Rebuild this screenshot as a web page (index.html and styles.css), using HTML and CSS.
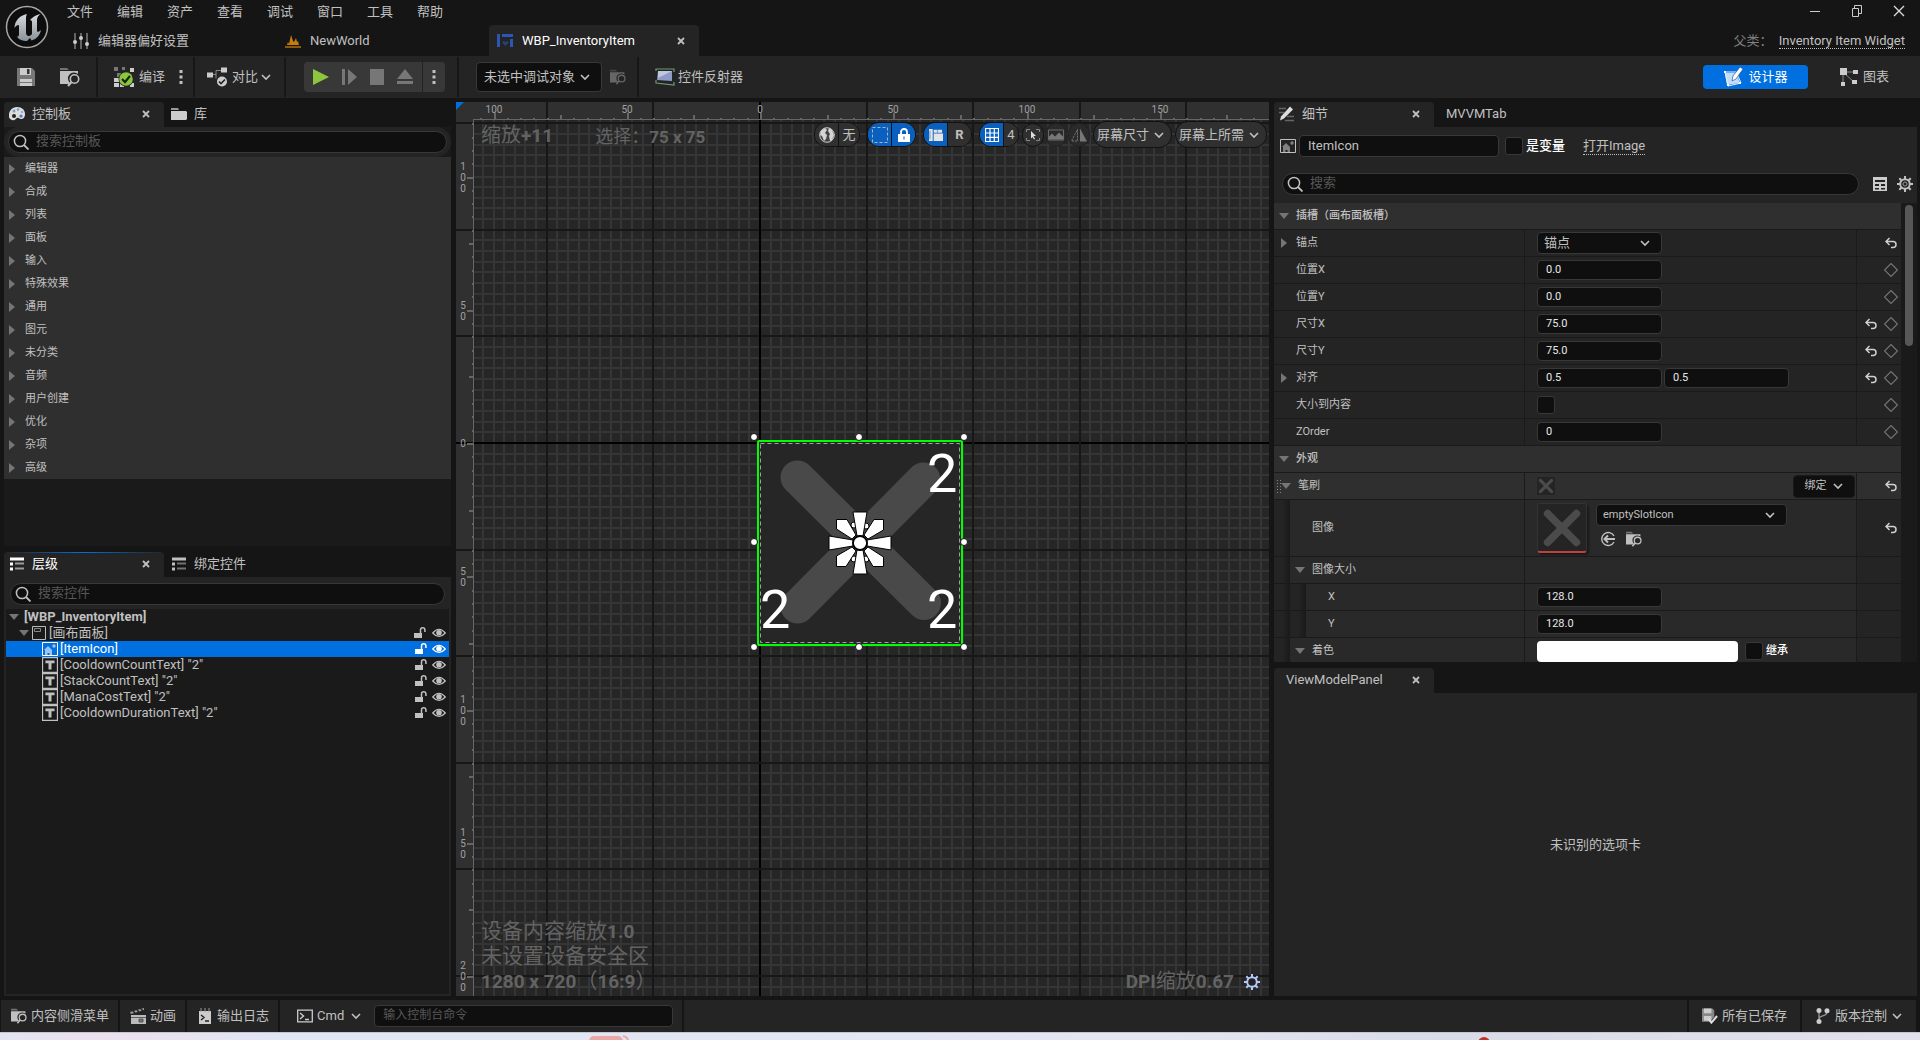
FILE: index.html
```html
<!DOCTYPE html>
<html lang="zh-CN">
<head>
    <meta charset="UTF-8">
    <title>WBP_InventoryItem</title>
    <link rel="stylesheet" href="styles.css">
</head>
<body>
    <svg class="sprite" aria-hidden="true">
        <symbol id="i-close" viewBox="0 0 8 8"><path d="M1 1l6 6M7 1L1 7" stroke="currentColor" stroke-width="1.8"/></symbol>
        <symbol id="i-chevron" viewBox="0 0 12 12"><path d="M2 4l4 4 4-4" fill="none" stroke="currentColor" stroke-width="1.6"/></symbol>
        <symbol id="i-right" viewBox="0 0 10 12"><path d="M2 1v10l6-5z" fill="currentColor"/></symbol>
        <symbol id="i-down" viewBox="0 0 10 12"><path d="M0 3h10L5 9z" fill="currentColor"/></symbol>
        <symbol id="i-search" viewBox="0 0 16 16"><circle cx="7" cy="7" r="5.6" fill="none" stroke="currentColor" stroke-width="1.5"/><path d="M11 11l4.5 4.5" stroke="currentColor" stroke-width="1.8"/></symbol>
        <symbol id="i-dots" viewBox="0 0 4 16"><path d="M.5 1h3v3h-3zM.5 6.500h3v3h-3zM.5 12h3v3h-3z" fill="currentColor"/></symbol>
        <symbol id="i-sliders" viewBox="0 0 16 16"><path d="M2 0v16M8 0v16M14 0v16" stroke="#999" stroke-width="1.2"/><circle cx="2" cy="9" r="2" fill="#ccc"/><circle cx="8" cy="5" r="2" fill="#ccc"/><circle cx="14" cy="11" r="2" fill="#ccc"/></symbol>
        <symbol id="i-world" viewBox="0 0 16 14"><path d="M0 12h16v2H0z" fill="#8a5a0c"/><path d="M2 11l1-3 1 2 2-9 2 6 1 1 2-4 1 4 1-1 1 4z" fill="#c77c0e"/></symbol>
        <symbol id="i-widget" viewBox="0 0 16 14"><path d="M0 0h3v13H0zM5 0h11v3H5zM13 5h3v8h-3z" fill="#2c55b4"/><path d="M8.500 12L5.500 9V7.500L7 7l1.500 1L10 7l1.500.5V9z" fill="#2a3f78"/></symbol>
        <symbol id="i-save" viewBox="0 0 18 18"><path d="M0 0h15l3 3v15H0z" fill="#777"/><path d="M3 0h11v7H3zM3 11h12v7H3z" fill="#ccc"/><path d="M10 1h2.500v5H10z" fill="#333"/><path d="M3 14h12v1H3z" fill="#777"/></symbol>
        <symbol id="i-browse" viewBox="0 0 20 18"><path d="M0 0h7l2 2H0z" fill="currentColor" opacity=".5"/><path d="M0 3h18v3a6 6 0 0 0-8 9l-1 1H0z" fill="currentColor"/><circle cx="14.500" cy="11" r="4.200" fill="none" stroke="currentColor" stroke-width="1.600"/><path d="M11.500 14L8 18" stroke="currentColor" stroke-width="2"/></symbol>
        <symbol id="i-compile" viewBox="0 0 20 20"><path d="M0 0h4v4H0zM8 0h3v3H8zM3 6h4v4H3z" fill="#777"/><path d="M16 1h4v4h-4zM0 11h5v4H0zM0 16h5v4H0zM6 16h4v4H6zM16 16h4v4h-4z" fill="#ccc"/><circle cx="12" cy="12" r="7.500" fill="#222"/><circle cx="12" cy="12" r="6.800" fill="#8cc63f"/><path d="M8 12l3 3 5-6" fill="none" stroke="#16260a" stroke-width="2.200"/></symbol>
        <symbol id="i-diff" viewBox="0 0 20 19"><path d="M5 7h4M9 11V3h5" fill="none" stroke="#888" stroke-width="1"/><path d="M0 5h6v5H0zM14 0h6v5h-6z" fill="#ccc"/><circle cx="15" cy="14" r="5" fill="#ccc"/><path d="M12 14l2 2 4-4" fill="none" stroke="#222" stroke-width="1.600"/></symbol>
        <symbol id="i-reflector" viewBox="0 0 20 18"><path d="M1 3V1h18v3M1 12v3l18 2v-3" fill="none" stroke="#6d9a70" stroke-width="1.200"/><path d="M3 3h14v10L2 12z" fill="#8f9bc4"/><path d="M3 3h14l-14 7z" fill="#c0c7de"/></symbol>
        <symbol id="i-palette" viewBox="0 0 16 14"><path d="M8 0c5 0 8 3 8 7s-2 5-4 5-2-2-4-1-2 3-5 2-3-3-3-5C0 4 3 0 8 0z" fill="#ddd"/><circle cx="5" cy="9" r="2" fill="#222"/><circle cx="5" cy="4" r="1.500" fill="#7f9cc4"/><circle cx="9" cy="2.500" r="1.300" fill="#7f9cc4"/><circle cx="13" cy="5" r="1.300" fill="#8fb1d8"/><circle cx="12" cy="9" r="1.600" fill="#4a78b8"/></symbol>
        <symbol id="i-folder" viewBox="0 0 16 12"><path d="M0 0h7l1 2H0z" fill="#999"/><path d="M0 3h15l1 1v7l-1 1H0z" fill="#ccc"/></symbol>
        <symbol id="i-list" viewBox="0 0 14 13"><path d="M0 0h14v3H0zM0 5h3v3H0zM0 10h3v3H0z" fill="currentColor"/><path d="M5 5h9v2H5zM5 10h9v2H5z" fill="currentColor" opacity=".55"/></symbol>
        <symbol id="i-lock" viewBox="0 0 12 12"><path d="M0 6h8v5H0z" fill="currentColor"/><path d="M6.500 6V3a2.200 2.200 0 0 1 4.400 0v2" fill="none" stroke="currentColor" stroke-width="1.500"/></symbol>
        <symbol id="i-eye" viewBox="0 0 14 10"><path d="M.7 5Q7-2.500 13.300 5 7 12 .7 5z" fill="none" stroke="currentColor" stroke-width="1.200"/><circle cx="7" cy="4.800" r="2.800" fill="currentColor"/></symbol>
        <symbol id="i-panel" viewBox="0 0 14 14"><path d="M.5.5h13v13H.5z" fill="none" stroke="#bbb"/><path d="M2.500 2.500h6v3h-6z" fill="none" stroke="#888"/></symbol>
        <symbol id="i-image" viewBox="0 0 16 14"><path d="M.5.5h15v13H.5z" fill="none" stroke="currentColor"/><path d="M2 8l4-4 4 4v5H7.500v-2h-2v2H3V8z" fill="currentColor" opacity=".6"/><circle cx="12" cy="4" r="1.700" fill="currentColor" opacity=".6"/></symbol>
        <symbol id="i-text" viewBox="0 0 14 14"><path d="M.5.5h13v13H.5z" fill="none" stroke="currentColor"/><path d="M3 3h8v2.500H8.300V11H5.700V5.500H3z" fill="currentColor"/></symbol>
        <symbol id="i-undo" viewBox="0 0 12 12"><path d="M4.500 1L1 4.500 4.500 8M1.500 4.500H8a3 3 0 0 1 0 6H6" fill="none" stroke="currentColor" stroke-width="1.500"/></symbol>
        <symbol id="i-diamond" viewBox="0 0 14 14"><path d="M7 .5L13.500 7 7 13.500.5 7z" fill="none" stroke="#757575" stroke-width="1.100"/></symbol>
        <symbol id="i-pencil" viewBox="0 0 16 15"><path d="M0 2h7M0 6h5M8 10h7M6 14h9" stroke="#666" stroke-width="1.500"/><path d="M1 14l1-4L11 0l3 3-9 9z" fill="#ddd"/></symbol>
        <symbol id="i-table" viewBox="0 0 14 14"><path d="M0 0h14v14H0z" fill="#ccc"/><path d="M2 3h10v2H2zM2 7h4v2H2zM8 7h4v2H8zM2 11h4v1.500H2zM8 11h4v1.500H8z" fill="#222"/></symbol>
        <symbol id="i-gear" viewBox="0 0 16 16"><path d="M8 0v16M0 8h16M2.300 2.300l11.400 11.400M13.700 2.300L2.300 13.700" stroke="currentColor" stroke-width="2"/><circle cx="8" cy="8" r="4.800" fill="#222" stroke="currentColor" stroke-width="2"/></symbol>
        <symbol id="i-gear-dot" viewBox="0 0 16 16"><use href="#i-gear"/><circle cx="8" cy="8" r="2" fill="none" stroke="#999"/></symbol>
        <symbol id="i-designer" viewBox="0 0 20 20"><path d="M2 6h11l4 10-13 2z" fill="#c4dcf6"/><path d="M1 5h14M2 5l3 14 13-3-3-7" fill="none" stroke="#e8f1fb"/><path d="M1 4h2v2H1zM4 17h2v2H4zM16 15h2v2h-2z" fill="#fff"/><path d="M9 14l1-5L17 0l3 2-7 10z" fill="#fff" stroke="#245a9c" stroke-width=".7"/></symbol>
        <symbol id="i-graph" viewBox="0 0 18 18"><path d="M4 5l10 9M4 4h10M3 4v10" stroke="#888" fill="none"/><path d="M0 0h7v7H0zM13 2h5v4h-5zM1 14h4v4H1zM12 12h5v4h-5z" fill="#ccc"/></symbol>
        <symbol id="i-use" viewBox="0 0 16 16"><path d="M14 5a6.500 6.500 0 1 0 0 6" fill="none" stroke="currentColor" stroke-width="1.400"/><path d="M15 8H5M8 4.500L4.500 8 8 11.500" fill="none" stroke="currentColor" stroke-width="2"/></symbol>
        <symbol id="i-cross" viewBox="0 0 48 48"><path d="M9 9l30 30M39 9L9 39" stroke="#4b4b4b" stroke-width="8" stroke-linecap="round"/></symbol>
        <symbol id="i-globe" viewBox="0 0 16 16"><circle cx="8" cy="8" r="7.300" fill="#444" stroke="#ccc"/><path d="M2 4l4-3 2 2-2 3 2 2-1 4-2 2-2-5-2-1zM10 1l3 2 2 5-2 5-2 1-1-5 1-2-2-3z" fill="#d4d4d4"/></symbol>
        <symbol id="i-dash" viewBox="0 0 16 16"><path d="M.5.5h15v15H.5z" fill="none" stroke="#a8b4c0" stroke-dasharray="3 2"/></symbol>
        <symbol id="i-locked" viewBox="0 0 12 14"><path d="M0 6h12v8H0z" fill="#fff"/><path d="M3 6V4a3 3 0 0 1 6 0v2" fill="none" stroke="#fff" stroke-width="1.800"/><path d="M5.500 8.500h1v3h-1z" fill="#0b5cb5"/></symbol>
        <symbol id="i-layout" viewBox="0 0 15 13"><path d="M0 0h4v13H0zM5 1h9v3H5zM5 5h10v8H5z" fill="#e4e4e4"/><path d="M9 1v3M1 2v9" stroke="#0b5cb5" stroke-width=".6"/></symbol>
        <symbol id="i-grid" viewBox="0 0 14 14"><path d="M.5.5h13v13H.5zM5 0v14M9.300 0v14M0 5h14M0 9.300h14" fill="none" stroke="#fff" stroke-width="1.200"/></symbol>
        <symbol id="i-pick" viewBox="0 0 14 12"><path d="M.5 3V.5H4M10 .5h3.500V3M13.500 9v2.500H10M4 11.500H.5V9" fill="none" stroke="#888"/><path d="M5 2l5 5H7.500L9 10l-1 .5L6.500 8 5 9.500z" fill="#ddd"/></symbol>
        <symbol id="i-picture" viewBox="0 0 16 11"><path d="M.5.5h15v10H.5z" fill="none" stroke="#6a6a6a"/><path d="M1 10V7l3-3 3 3 4-4 4 4v3z" fill="#777"/></symbol>
        <symbol id="i-flip" viewBox="0 0 16 13"><path d="M6.500 1v11.500H.5z" fill="none" stroke="#777" stroke-dasharray="2 1"/><path d="M9 0l7 13H9z" fill="#777"/></symbol>
        <symbol id="i-clap" viewBox="0 0 16 16"><path d="M0 4l14-4v2L1 6z" fill="#999"/><path d="M3 3l2 2M7 2l2 2M11 1l2 2" stroke="#242424" stroke-width="1.500"/><path d="M1 7h15v9H1z" fill="#bbb"/><path d="M1 9.500h15M9 11h4v3H9z" stroke="#444" fill="#777" stroke-width=".8"/></symbol>
        <symbol id="i-log" viewBox="0 0 12 16"><path d="M0 3h12v13H0z" fill="#ccc"/><path d="M2 0v4M6 0v4M10 0v4" stroke="#999"/><path d="M2 7l3 2.500L2 12M6 13h4" fill="none" stroke="#222" stroke-width="1.400"/></symbol>
        <symbol id="i-cmd" viewBox="0 0 16 13"><path d="M.7.7h14.600v11.600H.7z" fill="none" stroke="#ccc" stroke-width="1.300"/><path d="M3 3.500l3.500 3L3 9.500M8 10h4" fill="none" stroke="#ccc" stroke-width="1.400"/></symbol>
        <symbol id="i-saved" viewBox="0 0 17 16"><path d="M0 0h11l2 2v7l-5 5H0z" fill="#888"/><path d="M2 0h8v5H2zM2 8h8v5H2z" fill="#ccc"/><path d="M7 11l3 4 6-7" fill="none" stroke="#ddd" stroke-width="2.200"/></symbol>
        <symbol id="i-branch" viewBox="0 0 14 16"><path d="M3 3v10M11 4c0 5-8 3-8 7" fill="none" stroke="#999" stroke-width="1.300"/><circle cx="3" cy="2.500" r="2.500" fill="#ccc"/><circle cx="3" cy="13.500" r="2.500" fill="#ccc"/><circle cx="11" cy="2.800" r="2.500" fill="#ccc"/></symbol>
    </svg>

    <header class="titlebar">
        <svg class="logo" viewBox="0 0 44 44" role="img" aria-label="Unreal">
            <defs><linearGradient id="metal" x1="0" y1="0" x2="0" y2="1"><stop offset="0" stop-color="#dadada"/><stop offset="1" stop-color="#87929a"/></linearGradient></defs>
            <circle cx="22" cy="22" r="20.500" fill="#0d0d0d" stroke="#a8a8a8" stroke-width="1.500"/>
            <path d="M22 9C15 10.500 9.500 15.500 9.500 23c2-3 4.500-4 4.500-2v8c0 2-.5 2.500-2 2.500C14 35 18 36 22 36l3-3 1.500 2.500C32 34 35 30 36 25c-2 2-4 2.500-4 .5V15c0-3 1.500-4.500 3.500-6-5 1-8.500 3.500-10.500 6 1.500 0 2 1 2 2v12c-1 1.500-2.500 2-3.500 2s-2.500-1-2.500-3V13c0-2 .5-3 1-4z" fill="url(#metal)"/>
        </svg>
        <div class="title-main">
            <nav class="menu">
                <button>文件</button>
                <button>编辑</button>
                <button>资产</button>
                <button>查看</button>
                <button>调试</button>
                <button>窗口</button>
                <button>工具</button>
                <button>帮助</button>
            </nav>
            <div class="doc-tabs">
                <button class="doc-tab"><svg class="ic16"><use href="#i-sliders"/></svg>编辑器偏好设置</button>
                <button class="doc-tab"><svg class="ic16"><use href="#i-world"/></svg>NewWorld</button>
                <button class="doc-tab active"><svg class="ic16"><use href="#i-widget"/></svg><span>WBP_InventoryItem</span><svg class="ic8"><use href="#i-close"/></svg></button>
            </div>
        </div>
        <div class="title-side">
            <div class="window-buttons">
                <button aria-label="最小化"><svg viewBox="0 0 12 12"><path d="M1 6.500h10" stroke="#ccc"/></svg></button>
                <button aria-label="还原"><svg viewBox="0 0 12 12"><path d="M1.500 3.500h6v8h-6zM3.500 3V.5h7v8H8" fill="none" stroke="#ccc"/></svg></button>
                <button aria-label="关闭"><svg viewBox="0 0 12 12"><path d="M1 1l10 10M11 1L1 11" stroke="#ddd" stroke-width="1.300"/></svg></button>
            </div>
            <div class="parent-class">父类<span class="colon">：</span> <a href="#">Inventory Item Widget</a></div>
        </div>
    </header>

    <div class="toolbar">
        <div class="tool-group files">
            <button aria-label="保存"><svg class="ic18"><use href="#i-save"/></svg></button>
            <button aria-label="浏览"><svg class="ic20"><use href="#i-browse"/></svg></button>
        </div>
        <div class="tool-group compile">
            <button><svg class="ic20"><use href="#i-compile"/></svg>编译</button>
            <button aria-label="编译选项"><svg class="dots"><use href="#i-dots"/></svg></button>
        </div>
        <div class="tool-group diff">
            <button><svg class="ic20"><use href="#i-diff"/></svg>对比<svg class="ic12"><use href="#i-chevron"/></svg></button>
        </div>
        <div class="tool-group play">
            <div class="play-box">
                <button aria-label="运行"><svg viewBox="0 0 18 18"><path d="M1 1v16l16-8z" fill="#8cc63f"/></svg></button>
                <button aria-label="单步"><svg viewBox="0 0 18 18"><path d="M2 1h3v16H2zM8 1v16l9-8z" fill="#777"/></svg></button>
                <button aria-label="停止"><svg viewBox="0 0 18 18"><path d="M2 1h14v16H2z" fill="#777"/></svg></button>
                <button aria-label="弹出"><svg viewBox="0 0 18 18"><path d="M1 11h16L9 1zM1 13h16v3H1z" fill="#777"/></svg></button>
                <button class="more" aria-label="运行选项"><svg class="dots"><use href="#i-dots"/></svg></button>
            </div>
        </div>
        <div class="tool-group debug">
            <select class="debug-select" aria-label="调试对象"><option>未选中调试对象</option></select>
            <button class="dim" aria-label="定位"><svg class="ic16"><use href="#i-browse"/></svg></button>
        </div>
        <div class="tool-group last">
            <button><svg class="ic20"><use href="#i-reflector"/></svg>控件反射器</button>
        </div>
        <div class="modes">
            <button class="mode active"><svg class="ic20"><use href="#i-designer"/></svg>设计器</button>
            <button class="mode"><svg class="ic18"><use href="#i-graph"/></svg>图表</button>
        </div>
    </div>

    <main class="workspace">
        <div class="column left">
            <section class="dock">
                <div class="tabs">
                    <button class="tab active"><svg class="ic16"><use href="#i-palette"/></svg><span>控制板</span><svg class="ic8"><use href="#i-close"/></svg></button>
                    <button class="tab"><svg class="ic16"><use href="#i-folder"/></svg><span>库</span></button>
                </div>
                <div class="dock-body palette">
                    <label class="search"><svg class="ic16"><use href="#i-search"/></svg><input type="text" placeholder="搜索控制板" aria-label="搜索控制板"></label>
                    <ul class="categories">
                        <li><svg><use href="#i-right"/></svg>编辑器</li>
                        <li><svg><use href="#i-right"/></svg>合成</li>
                        <li><svg><use href="#i-right"/></svg>列表</li>
                        <li><svg><use href="#i-right"/></svg>面板</li>
                        <li><svg><use href="#i-right"/></svg>输入</li>
                        <li><svg><use href="#i-right"/></svg>特殊效果</li>
                        <li><svg><use href="#i-right"/></svg>通用</li>
                        <li><svg><use href="#i-right"/></svg>图元</li>
                        <li><svg><use href="#i-right"/></svg>未分类</li>
                        <li><svg><use href="#i-right"/></svg>音频</li>
                        <li><svg><use href="#i-right"/></svg>用户创建</li>
                        <li><svg><use href="#i-right"/></svg>优化</li>
                        <li><svg><use href="#i-right"/></svg>杂项</li>
                        <li><svg><use href="#i-right"/></svg>高级</li>
                    </ul>
                </div>
            </section>
            <section class="dock">
                <div class="tabs">
                    <button class="tab active focused"><svg class="ic14"><use href="#i-list"/></svg><span>层级</span><svg class="ic8"><use href="#i-close"/></svg></button>
                    <button class="tab"><svg class="ic14"><use href="#i-list"/></svg><span>绑定控件</span></button>
                </div>
                <div class="dock-body hierarchy">
                    <label class="search"><svg class="ic16"><use href="#i-search"/></svg><input type="text" placeholder="搜索控件" aria-label="搜索控件"></label>
                    <ul class="tree">
                        <li class="root"><svg class="arrow"><use href="#i-down"/></svg><span>[WBP_InventoryItem]</span></li>
                        <li class="depth1"><svg class="arrow"><use href="#i-down"/></svg><svg class="ic14"><use href="#i-panel"/></svg><span>[画布面板]</span><svg class="ic12"><use href="#i-lock"/></svg><svg class="ic14"><use href="#i-eye"/></svg></li>
                        <li class="depth2 selected"><svg class="ic16"><use href="#i-image"/></svg><span>[ItemIcon]</span><svg class="ic12"><use href="#i-lock"/></svg><svg class="ic14"><use href="#i-eye"/></svg></li>
                        <li class="depth2"><svg class="ic16"><use href="#i-text"/></svg><span>[CooldownCountText] "2"</span><svg class="ic12"><use href="#i-lock"/></svg><svg class="ic14"><use href="#i-eye"/></svg></li>
                        <li class="depth2"><svg class="ic16"><use href="#i-text"/></svg><span>[StackCountText] "2"</span><svg class="ic12"><use href="#i-lock"/></svg><svg class="ic14"><use href="#i-eye"/></svg></li>
                        <li class="depth2"><svg class="ic16"><use href="#i-text"/></svg><span>[ManaCostText] "2"</span><svg class="ic12"><use href="#i-lock"/></svg><svg class="ic14"><use href="#i-eye"/></svg></li>
                        <li class="depth2"><svg class="ic16"><use href="#i-text"/></svg><span>[CooldownDurationText] "2"</span><svg class="ic12"><use href="#i-lock"/></svg><svg class="ic14"><use href="#i-eye"/></svg></li>
                    </ul>
                </div>
            </section>
        </div>

        <section class="stage">
            <svg class="canvas">
                <g id="grid"></g>
                <!-- selected widget, origin of the canvas is 304,341 -->
                <g>
                    <rect x="302" y="339" width="204" height="204" fill="#262626"/>
                    <path d="M341.500 375.500L468 501M467.500 377.500L341.500 504.500" stroke="#494949" stroke-width="34" stroke-linecap="round"/>
                    <rect x="304.500" y="341.500" width="199" height="199" fill="none" stroke="#a0a0a0" stroke-dasharray="4 3"/>
                    <rect x="302" y="339" width="204" height="204" rx="1" fill="none" stroke="#00ff00" stroke-width="2"/>
                    <text class="count" x="471" y="390">2</text>
                    <text class="count" x="304" y="526">2</text>
                    <text class="count" x="471" y="526">2</text>
                </g>
                <g fill="#fff" stroke="#111" stroke-width="1">
                    <circle cx="298" cy="335" r="3.500"/><circle cx="403" cy="335" r="3.500"/><circle cx="508" cy="335" r="3.500"/>
                    <circle cx="298" cy="440" r="3.500"/><circle cx="508" cy="440" r="3.500"/>
                    <circle cx="298" cy="545" r="3.500"/><circle cx="403" cy="545" r="3.500"/><circle cx="508" cy="545" r="3.500"/>
                </g>
                <g transform="translate(404 441)" fill="#fff" stroke="#000">
                    <circle cx="-6" cy="-18" r="3"/><circle cx="6" cy="-17" r="3"/><circle cx="-6" cy="16" r="3"/><circle cx="6" cy="16" r="3"/>
                    <path id="petal" d="M-7-31H7L3-7H-3z"/>
                    <use href="#petal" transform="rotate(90)"/>
                    <use href="#petal" transform="rotate(180)"/>
                    <use href="#petal" transform="rotate(270)"/>
                    <path id="leaf" d="M-23.500-23.500H-13L-4-8-8-4-23.500-14z"/>
                    <use href="#leaf" transform="rotate(90)"/>
                    <use href="#leaf" transform="rotate(180)"/>
                    <use href="#leaf" transform="rotate(270)"/>
                    <circle r="7" stroke-width="1.800"/>
                </g>
                <g id="rulers"></g>
            </svg>
            <div class="overlay top">
                <div class="info"><span>缩放<b>+11</b></span><span class="mid">选择<span class="colon">：</span><b>75 x 75</b></span></div>
                <div class="view-tools">
                    <div class="pill local"><button aria-label="本地化"><svg class="ic16"><use href="#i-globe"/></svg></button><button>无</button></div>
                    <div class="pill"><button class="on" aria-label="轮廓"><svg class="ic16"><use href="#i-dash"/></svg></button><button class="on" aria-label="锁定"><svg class="ic14"><use href="#i-locked"/></svg></button></div>
                    <div class="pill"><button class="on" aria-label="布局"><svg class="ic14"><use href="#i-layout"/></svg></button><button><b>R</b></button></div>
                    <div class="pill tight"><button class="on" aria-label="网格"><svg class="ic14"><use href="#i-grid"/></svg></button><button class="slim">4</button></div>
                    <button class="round" aria-label="选取"><svg class="ic14"><use href="#i-pick"/></svg></button>
                    <button class="round off" aria-label="图片"><svg class="ic16"><use href="#i-picture"/></svg></button>
                    <button class="round off" aria-label="翻转"><svg class="ic16"><use href="#i-flip"/></svg></button>
                    <select class="view-select" aria-label="屏幕尺寸"><option>屏幕尺寸</option></select>
                    <select class="view-select wide" aria-label="屏幕上所需"><option>屏幕上所需</option></select>
                </div>
            </div>
            <div class="overlay bottom">
                <div class="device">设备内容缩放<b>1.0</b><br>未设置设备安全区<br><b>1280 x 720</b>（<b>16:9</b>）</div>
                <div class="dpi"><span><b>DPI</b>缩放<b>0.67</b></span><button aria-label="DPI设置"><svg class="ic16"><use href="#i-gear"/></svg></button></div>
            </div>
        </section>

        <div class="column right">
            <section class="dock">
                <div class="tabs">
                    <button class="tab active"><svg class="ic16"><use href="#i-pencil"/></svg><span>细节</span><svg class="ic8"><use href="#i-close"/></svg></button>
                    <button class="tab plain"><span>MVVMTab</span></button>
                </div>
                <div class="dock-body details">
                    <div class="name-row">
                        <svg class="ic16"><use href="#i-image"/></svg>
                        <input type="text" class="name-box" value="ItemIcon" aria-label="名称">
                        <label class="check"><input type="checkbox">是变量</label>
                        <a href="#">打开Image</a>
                    </div>
                    <div class="filter-row">
                        <label class="search"><svg class="ic16"><use href="#i-search"/></svg><input type="text" placeholder="搜索" aria-label="搜索"></label>
                        <button aria-label="表格"><svg class="ic14"><use href="#i-table"/></svg></button>
                        <button aria-label="设置"><svg class="ic16"><use href="#i-gear-dot"/></svg></button>
                    </div>
                    <div class="props-wrap">
                        <div class="props">
                            <h3 class="group"><svg class="arrow"><use href="#i-down"/></svg>插槽（画布面板槽）</h3>
                            <div class="prop">
                                <label class="name" for="anchor"><svg class="arrow"><use href="#i-right"/></svg>锚点</label>
                                <div class="value"><select id="anchor" class="field drop large"><option>锚点</option></select></div>
                                <div class="reset"><svg class="ic12"><use href="#i-undo"/></svg></div>
                            </div>
                            <div class="prop">
                                <label class="name" for="posx">位置X</label>
                                <div class="value"><input type="text" class="field" id="posx" value="0.0"></div>
                                <div class="reset"><svg class="ic14"><use href="#i-diamond"/></svg></div>
                            </div>
                            <div class="prop">
                                <label class="name" for="posy">位置Y</label>
                                <div class="value"><input type="text" class="field" id="posy" value="0.0"></div>
                                <div class="reset"><svg class="ic14"><use href="#i-diamond"/></svg></div>
                            </div>
                            <div class="prop">
                                <label class="name" for="sizex">尺寸X</label>
                                <div class="value"><input type="text" class="field" id="sizex" value="75.0"></div>
                                <div class="reset"><svg class="ic12"><use href="#i-undo"/></svg><svg class="ic14"><use href="#i-diamond"/></svg></div>
                            </div>
                            <div class="prop">
                                <label class="name" for="sizey">尺寸Y</label>
                                <div class="value"><input type="text" class="field" id="sizey" value="75.0"></div>
                                <div class="reset"><svg class="ic12"><use href="#i-undo"/></svg><svg class="ic14"><use href="#i-diamond"/></svg></div>
                            </div>
                            <div class="prop">
                                <label class="name" for="alignx"><svg class="arrow"><use href="#i-right"/></svg>对齐</label>
                                <div class="value"><input type="text" class="field" id="alignx" value="0.5"><input type="text" class="field" value="0.5" aria-label="对齐Y"></div>
                                <div class="reset"><svg class="ic12"><use href="#i-undo"/></svg><svg class="ic14"><use href="#i-diamond"/></svg></div>
                            </div>
                            <div class="prop">
                                <label class="name" for="autosize">大小到内容</label>
                                <div class="value check"><input type="checkbox" id="autosize"></div>
                                <div class="reset"><svg class="ic14"><use href="#i-diamond"/></svg></div>
                            </div>
                            <div class="prop">
                                <label class="name" for="zorder">ZOrder</label>
                                <div class="value"><input type="text" class="field" id="zorder" value="0"></div>
                                <div class="reset"><svg class="ic14"><use href="#i-diamond"/></svg></div>
                            </div>
                            <h3 class="group"><svg class="arrow"><use href="#i-down"/></svg>外观</h3>
                            <div class="prop brush">
                                <div class="name"><svg class="arrow"><use href="#i-down"/></svg>笔刷</div>
                                <div class="value"><svg class="swatch"><use href="#i-cross"/></svg><button class="bind">绑定<svg class="ic12"><use href="#i-chevron"/></svg></button></div>
                                <div class="reset"><svg class="ic12"><use href="#i-undo"/></svg></div>
                            </div>
                            <div class="prop nested tall">
                                <label class="name" for="asset">图像</label>
                                <div class="value">
                                    <div class="thumb"><svg><use href="#i-cross"/></svg></div>
                                    <div class="asset">
                                        <select id="asset" class="field drop"><option>emptySlotIcon</option></select>
                                        <div class="asset-tools">
                                            <button aria-label="使用"><svg class="ic16"><use href="#i-use"/></svg></button>
                                            <button aria-label="浏览"><svg class="ic16"><use href="#i-browse"/></svg></button>
                                        </div>
                                    </div>
                                </div>
                                <div class="reset"><svg class="ic12"><use href="#i-undo"/></svg></div>
                            </div>
                            <div class="prop nested">
                                <div class="name"><svg class="arrow"><use href="#i-down"/></svg>图像大小</div>
                                <div class="value"></div>
                                <div class="reset"></div>
                            </div>
                            <div class="prop nested deep">
                                <label class="name" for="imgx">X</label>
                                <div class="value"><input type="text" class="field" id="imgx" value="128.0"></div>
                                <div class="reset"></div>
                            </div>
                            <div class="prop nested deep">
                                <label class="name" for="imgy">Y</label>
                                <div class="value"><input type="text" class="field" id="imgy" value="128.0"></div>
                                <div class="reset"></div>
                            </div>
                            <div class="prop nested">
                                <div class="name"><svg class="arrow"><use href="#i-down"/></svg>着色</div>
                                <div class="value"><button class="tint" aria-label="着色"></button><label class="check"><input type="checkbox">继承</label></div>
                                <div class="reset"></div>
                            </div>
                        </div>
                        <div class="scroll"><div class="thumb-bar"></div></div>
                    </div>
                </div>
            </section>
            <section class="dock">
                <div class="tabs">
                    <button class="tab active plain"><span>ViewModelPanel</span><svg class="ic8"><use href="#i-close"/></svg></button>
                </div>
                <div class="dock-body empty">未识别的选项卡</div>
            </section>
        </div>
    </main>

    <footer class="statusbar">
        <button><svg class="ic16"><use href="#i-browse"/></svg>内容侧滑菜单</button>
        <button><svg class="ic16"><use href="#i-clap"/></svg>动画</button>
        <button><svg class="ic16"><use href="#i-log"/></svg>输出日志</button>
        <div class="console">
            <button><svg class="ic16"><use href="#i-cmd"/></svg>Cmd<svg class="ic12"><use href="#i-chevron"/></svg></button>
            <input type="text" placeholder="输入控制台命令" aria-label="控制台命令">
        </div>
        <div class="status-right">
            <button><svg class="ic16"><use href="#i-saved"/></svg>所有已保存</button>
            <button><svg class="ic16"><use href="#i-branch"/></svg>版本控制<svg class="ic12"><use href="#i-chevron"/></svg></button>
        </div>
    </footer>
    <div class="desktop"><svg viewBox="0 0 1920 8" preserveAspectRatio="xMinYMin slice"><rect x="589" y="3" width="34" height="12" rx="5" fill="#eaa9a7"/><path d="M623 3q5 1 5 5" fill="none" stroke="#eaa9a7" stroke-width="2"/><circle cx="1484" cy="10" r="6" fill="#c0302b"/></svg></div>

    <script src="canvas.js"></script>
</body>
</html>
```
FILE: styles.css
```css
* {
    box-sizing: border-box;
}
body {
    margin: 0;
    height: 100vh;
    display: flex;
    flex-direction: column;
    overflow: hidden;
    background: #151515;
    color: #c0c0c0;
    font-family: Roboto, "Noto Sans CJK SC", sans-serif;
    font-size: 13px;
    line-height: 16px;
}
button, input, select {
    font: inherit;
    color: inherit;
}
button {
    display: flex;
    align-items: center;
    background: none;
    border: none;
    padding: 0;
    white-space: nowrap;
}
ul {
    list-style: none;
    margin: 0;
    padding: 0;
}
a {
    color: #c0c0c0;
    text-decoration: none;
    border-bottom: 1px dotted #c0c0c0;
}
svg {
    flex: none;
    display: block;
}
.sprite {
    width: 0;
    height: 0;
    position: absolute;
}
.ic8 { width: 8px; height: 8px; }
.ic12 { width: 12px; height: 12px; }
.ic14 { width: 14px; height: 14px; }
.ic16 { width: 16px; height: 16px; }
.ic18 { width: 18px; height: 18px; }
.ic20 { width: 20px; height: 20px; }
.dots { width: 4px; height: 16px; }
.colon {
    font-family: "Noto Sans CJK TC", sans-serif;
}

/* title bar */
.titlebar {
    display: flex;
    height: 56px;
    flex: none;
}
.logo {
    width: 44px;
    height: 44px;
    margin: 5px 16px 0 5px;
}
.title-main {
    display: flex;
    flex-direction: column;
    justify-content: space-between;
}
.menu {
    display: flex;
    gap: 24px;
    padding: 4px 0 0 2px;
}
.doc-tabs {
    display: flex;
    gap: 2px;
}
.doc-tab {
    width: 210px;
    height: 31px;
    padding: 0 14px 0 8px;
    gap: 9px;
    border-radius: 4px 4px 0 0;
}
.doc-tab.active {
    background: #242424;
    color: #fff;
}
.doc-tab .ic8, .tab .ic8 {
    margin-left: auto;
    color: #c0c0c0;
}
.title-side {
    margin-left: auto;
    padding-right: 15px;
    display: flex;
    flex-direction: column;
    align-items: flex-end;
}
.window-buttons {
    display: flex;
    gap: 30px;
    padding: 5px 0 15px;
}
.window-buttons svg {
    width: 12px;
    height: 12px;
}
.parent-class {
    color: #808080;
}
.parent-class a {
    margin-left: 3px;
}

/* toolbar */
.toolbar {
    display: flex;
    align-items: center;
    height: 42px;
    flex: none;
    background: #242424;
}
.tool-group {
    display: flex;
    align-items: center;
    height: 40px;
    border-right: 2px solid #171717;
}
.tool-group button {
    gap: 5px;
}
.files {
    gap: 25px;
    padding: 0 16px 0 17px;
}
.compile {
    gap: 14px;
    padding: 0 10px 0 16px;
}
.diff {
    padding: 0 12px;
}
.diff .ic12 {
    margin-left: -3px;
}
.play {
    padding: 0 12px 0 18px;
}
.play-box {
    display: flex;
    height: 30px;
    gap: 10px;
    padding-left: 8px;
    background: #383838;
    border-radius: 4px;
}
.play-box svg:not(.dots) {
    width: 18px;
    height: 18px;
}
.play-box .more {
    width: 23px;
    margin-left: -2px;
    justify-content: center;
    border-left: 1px solid #222;
}
.debug {
    padding: 0 11px 0 17px;
    gap: 8px;
}
.dim {
    color: #666;
}
select {
    appearance: none;
    background: #0f0f0f url("data:image/svg+xml,%3Csvg xmlns='http://www.w3.org/2000/svg' width='12' height='12'%3E%3Cpath d='M2 4l4 4 4-4' fill='none' stroke='%23c0c0c0' stroke-width='1.600'/%3E%3C/svg%3E") no-repeat right 10px center;
    border: 1px solid #383838;
    border-radius: 4px;
}
.debug-select {
    width: 126px;
    height: 30px;
    padding: 0 0 0 7px;
}
.tool-group.last {
    padding-left: 16px;
    border: none;
}
.tool-group.last button {
    gap: 3px;
}
.modes {
    display: flex;
    margin-left: auto;
    padding-right: 3px;
    gap: 4px;
}
.mode {
    width: 105px;
    height: 24px;
    justify-content: center;
    gap: 5px;
    border-radius: 4px;
}
.mode.active {
    background: #0070e0;
    color: #fff;
}

/* docked panels */
.workspace {
    flex: 1;
    min-height: 0;
    display: grid;
    grid-template-columns: minmax(0, 447fr) minmax(0, 813fr) minmax(0, 643fr);
    gap: 5px;
    padding: 4px 3px 4px 4px;
}
.column {
    display: grid;
    gap: 6px;
    min-height: 0;
}
.left {
    grid-template-rows: minmax(0, 1fr) minmax(0, 1fr);
}
.right {
    grid-template-rows: minmax(0, 560fr) minmax(0, 328fr);
}
.dock {
    display: flex;
    flex-direction: column;
    min-height: 0;
}
.tabs {
    display: flex;
    height: 25px;
    flex: none;
}
.tab {
    min-width: 160px;
    gap: 7px;
    padding: 0 14px 2px 5px;
    border-radius: 4px 4px 0 0;
}
.tab .ic14 {
    margin: 0 1px;
}
.tab:not(.active) {
    padding-left: 7px;
}
.tab.active {
    background: #242424;
}
.tab.plain {
    padding-left: 12px;
}
.tab.focused {
    color: #fff;
    background: linear-gradient(90deg, transparent, #0070e0 50%, transparent) top / 100% 1px no-repeat, #242424;
}
.dock-body {
    flex: 1;
    min-height: 0;
    background: #242424;
}
.search {
    display: flex;
    align-items: center;
    height: 22px;
    padding-left: 4px;
    gap: 7px;
    background: #0f0f0f;
    border: 1px solid #383838;
    border-radius: 11px;
}
.search input {
    flex: 1;
    min-width: 0;
    padding: 0 0 2px;
    background: none;
    border: none;
}
input::placeholder {
    color: #575757;
    opacity: 1;
}
.palette {
    display: flex;
    flex-direction: column;
    background: #1a1a1a;
}
.palette .search {
    margin: 4px;
    box-shadow: 0 0 0 4px #242424;
}
.categories {
    background: #2f2f2f;
    font-size: 11px;
}
.categories li {
    display: flex;
    align-items: center;
    height: 23px;
    padding-left: 3px;
    gap: 8px;
}
.categories svg, .arrow {
    width: 10px;
    height: 12px;
    color: #757575;
}
.hierarchy {
    display: flex;
    flex-direction: column;
    padding: 6px 2px 2px;
}
.hierarchy .search {
    margin: 0 4px 4px;
}
.tree {
    flex: 1;
    background: #1a1a1a;
}
.tree li {
    display: flex;
    align-items: center;
    height: 16px;
    padding: 0 2px 0 3px;
    gap: 5px;
}
.tree span {
    flex: 1;
    white-space: nowrap;
}
.tree .root {
    font-weight: bold;
}
.tree .depth1 {
    padding-left: 13px;
    gap: 3px;
}
.tree .depth2 {
    padding-left: 36px;
    gap: 2px;
}
.tree li svg:last-child {
    margin: 0 1px 0 3px;
}
.tree .selected {
    background: #0070e0;
    color: #fff;
}

/* designer canvas */
.stage {
    display: grid;
    grid-template-rows: minmax(0, 1fr);
    overflow: hidden;
    background: #262626;
}
.stage > * {
    grid-area: 1 / 1;
}
.canvas {
    width: 100%;
    height: 100%;
}
.canvas .count {
    font-size: 54px;
    fill: #fff;
}
.canvas .mark {
    font-size: 10px;
    fill: #a0a0a0;
    text-anchor: middle;
}
.overlay {
    display: flex;
    justify-content: space-between;
    color: #636363;
    font-size: 20px;
    line-height: 25px;
    z-index: 1;
}
.overlay b {
    font-size: 19px;
}
.overlay.top {
    align-self: start;
    padding: 17px 2px 0 25px;
}
.info {
    display: flex;
    gap: 42px;
    padding-top: 4px;
}
.mid {
    font-size: 18px;
}
.overlay .mid b {
    font-size: 17px;
}
.overlay.bottom {
    align-self: end;
    align-items: flex-end;
    padding: 0 9px 2px 25px;
}
.device {
    font-size: 21px;
}
.dpi {
    display: flex;
    align-items: center;
    gap: 10px;
}
.dpi .ic16 {
    color: #b3c7f7;
}
.view-tools {
    display: flex;
    align-items: center;
    gap: 3px;
    color: #c0c0c0;
    font-size: 13px;
    line-height: 16px;
}
.view-tools b {
    font-size: 13px;
}
.pill {
    display: flex;
    height: 25px;
    margin-right: 4px;
    border: 1px solid #111;
    border-radius: 12px;
    overflow: hidden;
}
.pill.tight {
    margin-right: 0;
}
.pill button {
    width: 23px;
    justify-content: center;
    background: #303030;
}
.pill button:first-child {
    width: 24px;
    border-right: 1px solid #111;
}
.pill.local button:last-child {
    width: 20px;
}
.pill .slim {
    width: 14px;
}
.pill .on {
    background: #0a60bf;
}
.round {
    width: 22px;
    height: 24px;
    margin-right: -2px;
    justify-content: center;
    background: #303030;
    border: 1px solid #111;
    border-radius: 12px;
}
.round.off {
    background: #2a2a2a;
    border-color: #222;
}
.view-select {
    width: 79px;
    height: 27px;
    padding: 0 0 0 3px;
    background-color: #303030;
    background-position: right 6px center;
    border-color: #111;
    border-radius: 13px;
}
.round + .view-select {
    margin-left: 2px;
}
.view-select.wide {
    width: 92px;
}

/* details */
.details {
    display: flex;
    flex-direction: column;
}
.name-row {
    display: flex;
    align-items: center;
    padding: 8px 6px 16px;
    gap: 3px;
}
.name-box {
    width: 200px;
    height: 22px;
    padding: 0 8px 2px;
    background: #0f0f0f;
    border: 1px solid #383838;
    border-radius: 4px;
}
.check {
    display: flex;
    align-items: center;
    gap: 3px;
    color: #fff;
    font-weight: 500;
}
.check input {
    appearance: none;
    width: 18px;
    height: 18px;
    margin: 0;
    background: #0f0f0f;
    border: 1px solid #383838;
    border-radius: 3px;
}
.name-row .check {
    margin: 0 15px 0 3px;
}
.filter-row {
    display: flex;
    align-items: center;
    gap: 10px;
    padding: 0 4px 8px 8px;
}
.filter-row .search {
    flex: 1;
    margin-right: 4px;
}
.props-wrap {
    flex: 1;
    min-height: 0;
    display: flex;
    background: #1a1a1a;
}
.props {
    flex: 1;
    overflow: hidden;
    font-size: 11px;
}
.group {
    display: flex;
    align-items: center;
    height: 27px;
    margin: 0;
    padding-left: 5px;
    gap: 7px;
    background: #2f2f2f;
    border-bottom: 1px solid #1a1a1a;
    font-size: 11px;
    font-weight: 500;
}
.prop {
    display: grid;
    grid-template-columns: 250px 1fr 44px;
    height: 27px;
    border-bottom: 1px solid #1a1a1a;
    background: #242424;
}
.name, .value, .reset {
    display: flex;
    align-items: center;
    min-width: 0;
}
.name {
    padding-left: 22px;
    gap: 7px;
}
.name .arrow {
    margin-left: -17px;
}
.value {
    padding-left: 12px;
    gap: 2px;
    border-left: 1px solid #1a1a1a;
    border-right: 1px solid #1a1a1a;
}
.reset {
    justify-content: flex-end;
    padding-right: 3px;
    gap: 7px;
}
.reset .ic12 {
    color: #d0d0d0;
}
.reset .ic12:last-child {
    margin-right: 1px;
}
.field {
    width: 125px;
    height: 20px;
    padding: 0 8px 2px;
    background-color: #0f0f0f;
    border: 1px solid #383838;
    border-radius: 4px;
    color: #e8e8e8;
}
.field.drop {
    padding: 0 0 0 6px;
    color: #c0c0c0;
}
.field.large {
    height: 22px;
    font-size: 13px;
}
.brush {
    background: #2f2f2f;
}
.brush .name {
    padding-left: 2px;
}
.brush .name::before {
    content: '';
    width: 5px;
    height: 14px;
    margin-right: -7px;
    background: radial-gradient(circle, #888 0, #888 1px, transparent 1px) 0 0 / 3px 3px;
}
.brush .name .arrow {
    margin-left: 0;
}
.swatch {
    width: 18px;
    height: 18px;
    background: #242424;
}
.bind {
    width: 62px;
    height: 23px;
    margin-left: auto;
    margin-right: 1px;
    justify-content: center;
    gap: 5px;
    background: #0f0f0f;
    border: 1px solid #1a1a1a;
    border-radius: 4px;
}
.nested {
    background: linear-gradient(90deg, #242424 8px, #1a1a1a 16px, #292929 16px);
}
.nested .name {
    padding-left: 38px;
}
.nested .reset {
    background: #242424;
}
.deep {
    background: linear-gradient(90deg, #242424 8px, #1a1a1a 16px, #242424 16px, #242424 24px, #1a1a1a 32px, #292929 32px);
}
.deep .name {
    padding-left: 54px;
}
.tall {
    height: 57px;
}
.thumb {
    width: 50px;
    height: 50px;
    padding: 1px 1px 0;
    background: #242424;
    border: 1px solid #333;
    border-bottom: 2px solid #c04040;
    border-radius: 3px;
    box-shadow: 2px 2px 2px #1a1a1a;
}
.thumb svg {
    width: 46px;
    height: 46px;
}
.asset {
    align-self: flex-start;
    margin-left: 7px;
    padding-top: 4px;
}
.asset .field {
    width: 191px;
    height: 22px;
    display: block;
}
.asset-tools {
    display: flex;
    gap: 10px;
    padding: 5px 0 0 4px;
}
.tint {
    width: 201px;
    height: 21px;
    background: #fff;
    border-radius: 4px;
}
.value .check {
    margin-left: 5px;
}
.scroll {
    width: 16px;
    padding: 2px 4px;
}
.thumb-bar {
    width: 8px;
    height: 141px;
    background: #575757;
    border-radius: 4px;
}
.empty {
    display: flex;
    align-items: center;
    justify-content: center;
}

/* status bar */
.statusbar {
    display: flex;
    height: 32px;
    flex: none;
    margin: 0 4px 0 1px;
    background: #242424;
}
.statusbar button {
    gap: 4px;
    padding: 0 9px 0 10px;
    border-right: 2px solid #151515;
}
.console {
    display: flex;
    align-items: center;
    padding: 0 9px 0 7px;
    border-right: 2px solid #151515;
}
.console button {
    margin-right: 3px;
    border: none;
}
.console button .ic12 {
    margin-left: 2px;
}
.console input {
    width: 299px;
    height: 22px;
    padding: 0 8px 2px;
    background: #0f0f0f;
    border: 1px solid #383838;
    border-radius: 4px;
    font-size: 12px;
}
.status-right {
    display: flex;
    margin-left: auto;
    border-left: 2px solid #151515;
}
.status-right button {
    padding: 0 13px;
}
.status-right button:last-child {
    border: none;
}
.desktop {
    height: 8px;
    flex: none;
    border-top: 1px solid #c8c4ce;
    background: linear-gradient(90deg, #e2e4f2, #ecdfee 5%, #e0e6f4 15%, #e4e6f2 60%, #d8dce8 75%, #e2e0ec);
}
.desktop svg {
    width: 100%;
    height: 7px;
}
```
FILE: canvas.js
```js
// draws the designer grid and both rulers
const NS = 'http://www.w3.org/2000/svg';
const SCALE = 2.665;
const ORIGIN = { x: 304, y: 341 };
const RULER = 18;

const stage = document.querySelector('.canvas');
const grid = document.getElementById('grid');
const rulers = document.getElementById('rulers');

function rect(parent, x, y, w, h, fill) {
    const el = document.createElementNS(NS, 'rect');
    el.setAttribute('x', x);
    el.setAttribute('y', y);
    el.setAttribute('width', w);
    el.setAttribute('height', h);
    el.setAttribute('fill', fill);
    parent.appendChild(el);
}

function mark(text, x, y) {
    const el = document.createElementNS(NS, 'text');
    el.setAttribute('class', 'mark');
    el.setAttribute('x', x);
    el.setAttribute('y', y);
    el.textContent = text;
    rulers.appendChild(el);
}

function draw() {
    const { width, height } = stage.getBoundingClientRect();
    const pos = (origin, units) => Math.round(origin + units * SCALE) - 1;
    grid.replaceChildren();
    rulers.replaceChildren();

    // minor lines every 4 units, major every 40
    for (let u = -400; u <= 400; u += 4) {
        if (u % 40 === 0) continue;
        rect(grid, pos(ORIGIN.x, u), 0, 2, height, '#353535');
        rect(grid, 0, pos(ORIGIN.y, u), width, 2, '#353535');
    }
    rect(rulers, 0, 0, width, RULER, '#303030');
    rect(rulers, 0, 0, RULER, height, '#303030');
    for (let u = -400; u <= 400; u += 40) {
        const color = u === 0 ? '#000' : '#171717';
        rect(grid, pos(ORIGIN.x, u), 0, 2, height, color);
        rect(grid, 0, pos(ORIGIN.y, u), width, 2, color);
        if (pos(ORIGIN.x, u) > RULER) rect(rulers, pos(ORIGIN.x, u), 0, 2, RULER, color);
        if (pos(ORIGIN.y, u) > RULER) rect(rulers, 0, pos(ORIGIN.y, u), RULER, 2, color);
    }
    rect(rulers, RULER - 1, RULER - 1, width, 1, '#666');
    rect(rulers, RULER - 1, RULER - 1, 1, height, '#666');

    for (let u = -400; u <= 400; u += 5) {
        const len = u % 50 === 0 ? 7 : u % 25 === 0 ? 5 : 2;
        const x = pos(ORIGIN.x, u) + 1;
        const y = pos(ORIGIN.y, u) + 1;
        const inX = x > RULER && x < width - 10;
        const inY = y > RULER && y < height - 10;
        if (inX) rect(rulers, x, RULER - len, 2, len, '#666');
        if (inY) rect(rulers, RULER - len, y, len, 2, '#666');
        if (u % 50 !== 0) continue;
        if (inX) mark(Math.abs(u), x, 11);
        if (inY) {
            const digits = String(Math.abs(u)).split('');
            digits.forEach((d, i) => mark(d, 7, y + 4 + (i - (digits.length - 1) / 2) * 11));
        }
    }
    const corner = document.createElementNS(NS, 'path');
    corner.setAttribute('d', 'M0 0h8L0 8z');
    corner.setAttribute('fill', '#0070e0');
    rulers.appendChild(corner);
}

draw();
window.addEventListener('resize', draw);
```
